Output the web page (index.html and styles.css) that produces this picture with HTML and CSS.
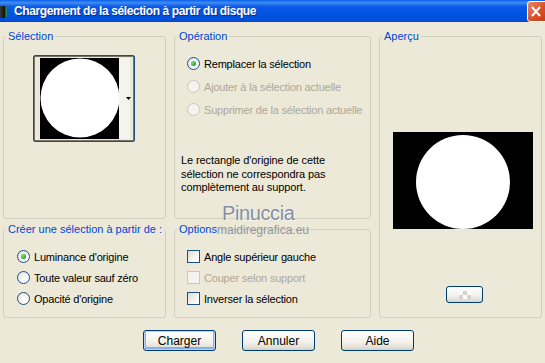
FILE: index.html
```html
<!DOCTYPE html>
<html lang="fr">
    <head>
        <meta charset="UTF-8" />
        <meta name="viewport" content="width=device-width, initial-scale=1.0" />
        <title>Chargement de la sélection à partir du disque</title>
        <link rel="stylesheet" href="styles.css">
    </head>
    <body>
        <div class="titlebar">
            <span class="app-icon"></span>
            <span class="title">Chargement de la sélection à partir du disque</span>
            <span class="close-btn">
                <svg width="17" height="19" viewBox="0 0 17 19">
                    <path d="M4 5 L12 14 M12 5 L4 14" stroke="#fff" stroke-width="2" />
                </svg>
            </span>
        </div>

        <div class="dialog">
            <div class="groups">
                <fieldset class="group group-selection">
                    <legend>Sélection</legend>
                    <div class="thumb">
                        <svg width="100" height="85" viewBox="0 0 100 85">
                            <rect x="6" y="2" width="79" height="81" fill="#000" />
                            <rect x="85" y="2" width="11" height="81" fill="#f4f3ee" />
                            <circle cx="46" cy="42" r="39.5" fill="#fff" />
                            <path d="M92 41 L97 41 L94.5 44 Z" fill="#000" />
                            <rect x="0.5" y="0.5" width="99" height="84" fill="none" stroke="#000" stroke-dasharray="1 1" />
                        </svg>
                    </div>
                </fieldset>

                <fieldset class="group group-operation">
                    <legend>Opération</legend>
                    <div class="option-list op-list">
                        <label class="option"><span class="radio checked"></span>Remplacer la sélection</label>
                        <label class="option disabled"><span class="radio"></span>Ajouter à la sélection actuelle</label>
                        <label class="option disabled"><span class="radio"></span>Supprimer de la sélection actuelle</label>
                    </div>
                    <p class="note">Le rectangle d'origine de cette<br>sélection ne correspondra pas<br>complètement au support.</p>
                </fieldset>

                <fieldset class="group group-preview">
                    <legend>Aperçu</legend>
                    <div class="preview">
                        <svg width="140" height="97" viewBox="0 0 140 97">
                            <rect width="140" height="97" fill="#000" />
                            <circle cx="70" cy="50" r="47" fill="#fff" />
                        </svg>
                    </div>
                    <button class="small-btn"><span class="checker"></span></button>
                </fieldset>

                <fieldset class="group group-source">
                    <legend>Créer une sélection à partir de :</legend>
                    <div class="option-list">
                        <label class="option"><span class="radio checked"></span>Luminance d'origine</label>
                        <label class="option"><span class="radio"></span>Toute valeur sauf zéro</label>
                        <label class="option"><span class="radio"></span>Opacité d'origine</label>
                    </div>
                </fieldset>

                <fieldset class="group group-options">
                    <legend>Options</legend>
                    <div class="option-list">
                        <label class="option"><span class="check"></span>Angle supérieur gauche</label>
                        <label class="option disabled"><span class="check"></span>Couper selon support</label>
                        <label class="option"><span class="check"></span>Inverser la sélection</label>
                    </div>
                </fieldset>
            </div>

            <div class="buttons">
                <button class="btn default">Charger</button>
                <button class="btn">Annuler</button>
                <button class="btn">Aide</button>
            </div>

            <!-- filigrane de l'auteur du tutoriel -->
            <div class="wm-name">Pinuccia</div>
            <div class="wm-site">maidiregrafica.eu</div>
        </div>
    </body>
</html>
```

FILE: styles.css
```css
body {
    margin: 0;
    background: #ece9d8;
    font-family: "Liberation Sans", Arial, sans-serif;
    font-size: 11px;
    color: #000;
    overflow: hidden;
}

.titlebar {
    height: 22px;
    display: flex;
    align-items: center;
    background: linear-gradient(#0a5fe8 0%, #3d8cf5 12%, #0c5ae6 30%, #0054e3 60%, #0050dc 90%, #0b44c0 100%);
    color: #fff;
}

.app-icon {
    width: 7px;
    height: 12px;
    margin-top: 1px;
    background: linear-gradient(90deg, #3a3a3a, #111 60%, #2fa64a);
    border-radius: 0 2px 2px 0;
}

.title {
    margin-left: 7px;
    font-family: "Liberation Sans", Arial, sans-serif;
    font-weight: bold;
    font-size: 12px;
    letter-spacing: -0.4px;
    text-shadow: 1px 1px 0 #0a2d8a;
    flex: 1;
}

.close-btn {
    width: 21px;
    height: 19px;
    margin-left: auto;
    margin-right: -5px;
    border: 1px solid #fff;
    border-radius: 3px;
    background: linear-gradient(135deg, #e98a6a, #d9532a 50%, #c13a10);
    display: flex;
}

.dialog {
    position: relative;
    height: 341px;
    padding-top: 8px;
    box-sizing: border-box;
}

.groups {
    display: grid;
    grid-template-columns: 163px 197px 163px;
    grid-template-rows: 189px 95px;
    column-gap: 8px;
    row-gap: 4px;
    margin-left: 3px;
}

.group {
    margin: 0;
    padding: 0;
    min-width: 0;
    border: 1px solid #d0d0bf;
    border-radius: 3px;
}

.group legend {
    margin-left: 2px;
    padding: 0 2px;
    line-height: 13px;
    color: #0046d5;
}

.group-preview {
    grid-column: 3;
    grid-row: 1 / 3;
}

.group-source {
    grid-column: 1;
    grid-row: 2;
}

.group-options {
    grid-column: 2;
    grid-row: 2;
}

.thumb {
    width: 100px;
    height: 85px;
    margin: 12px 0 0 29px;
    border: 1px solid #1c5180;
    border-radius: 2px;
}

.thumb svg,
.preview svg {
    display: block;
}

.option-list {
    display: flex;
    flex-direction: column;
    padding: 10px 0 0 12px;
}

.group-source .option-list {
    padding-left: 13px;
}

.op-list {
    padding-top: 9px;
}

.option {
    height: 21px;
    display: flex;
    align-items: center;
    gap: 4px;
    letter-spacing: -0.2px;
}

.op-list .option {
    height: 23px;
}

.option.disabled {
    color: #aca899;
}

.radio {
    width: 11px;
    height: 11px;
    border: 1px solid #1c5180;
    border-radius: 50%;
    background: radial-gradient(circle at 65% 70%, #fff 20%, #dcdad0 100%);
    display: flex;
    align-items: center;
    justify-content: center;
}

.radio.checked::after {
    content: "";
    width: 5px;
    height: 5px;
    border-radius: 50%;
    background: radial-gradient(circle at 35% 35%, #7fe07f, #21a121 70%);
}

.check {
    width: 11px;
    height: 11px;
    border: 1px solid #1c5180;
    background: linear-gradient(135deg, #dcdad0, #fff 80%);
}

.disabled .radio,
.disabled .check {
    border-color: #cac8bb;
    background: #f4f3ee;
}

.note {
    margin: 33px 0 0 6px;
    line-height: 13.5px;
    letter-spacing: -0.1px;
}

.preview {
    margin: 89px 0 0 13px;
    width: 140px;
}

.small-btn {
    display: flex;
    align-items: center;
    justify-content: center;
    width: 37px;
    height: 17px;
    margin: 57px 0 0 66px;
    padding: 0;
    border: 1px solid #003c74;
    border-radius: 3px;
    background: linear-gradient(#fff, #f1f0ea 60%, #d8d4c8);
}

.checker {
    width: 12px;
    height: 8px;
    background: conic-gradient(#d4d2cc 25%, #fff 0 50%, #d4d2cc 0 75%, #fff 0) 0 0 / 8px 8px;
}

.buttons {
    display: flex;
    gap: 26px;
    margin-top: 12px;
    padding-left: 143px;
}

.btn {
    width: 73px;
    height: 21px;
    padding: 0;
    border: 1px solid #003c74;
    border-radius: 3px;
    background: linear-gradient(#fff, #f3f2ec 55%, #e4e1d6 85%, #d6d0c5);
    font-family: "Liberation Sans", Arial, sans-serif;
    font-size: 12px;
    color: #000;
}

.btn.default {
    box-shadow: inset 0 0 0 1px #bcd4f6, inset 0 -1px 0 2px #89adf0;
}

.wm-name {
    position: absolute;
    left: 222px;
    top: 181px;
    font-size: 20px;
    line-height: 20px;
    letter-spacing: -0.4px;
    color: #848da0;
    text-shadow: 0 0 1px #fff, 1px 1px 0 #f6f5f0;
}

.wm-site {
    position: absolute;
    left: 217px;
    top: 202px;
    font-size: 12px;
    line-height: 12px;
    color: #8f96a2;
}
```
